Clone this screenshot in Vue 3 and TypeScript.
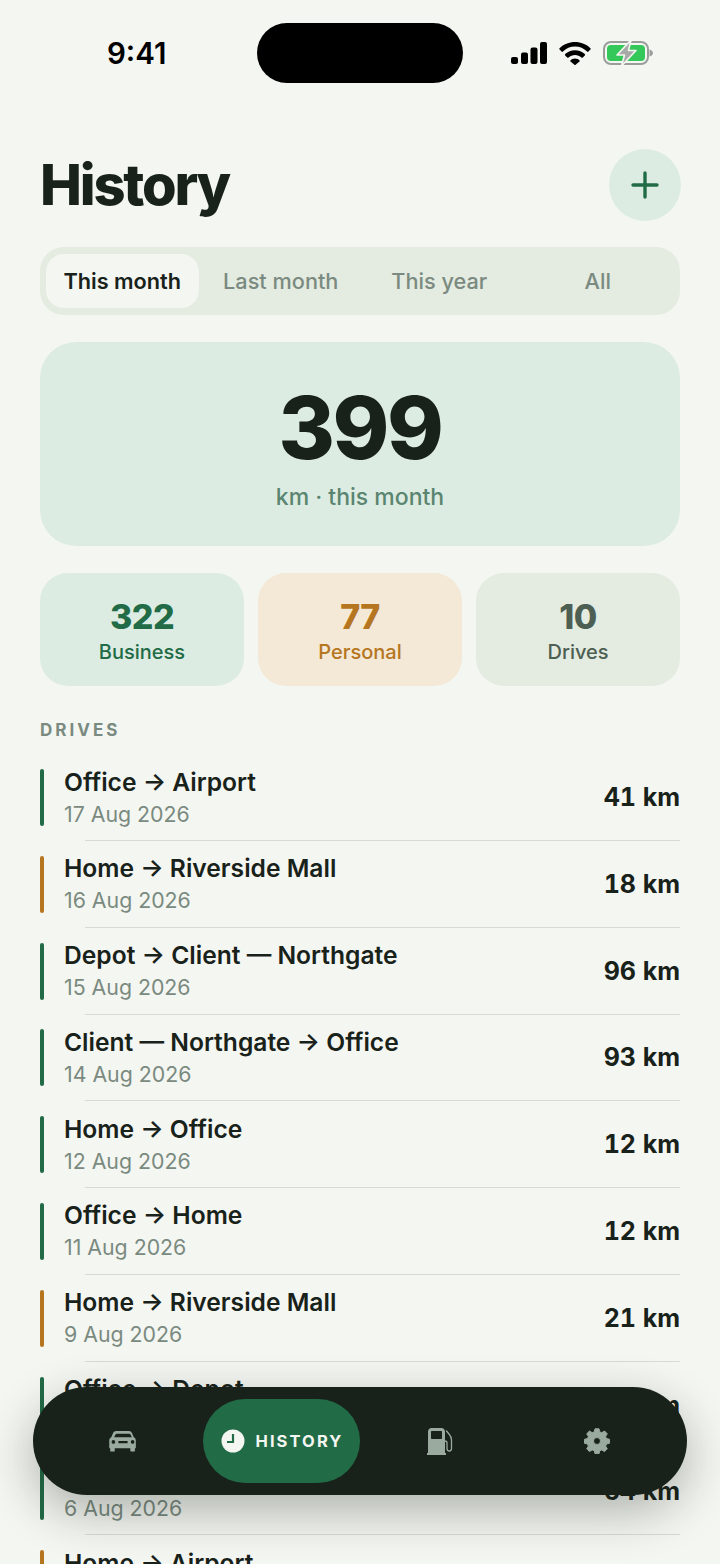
<template>
  <div class="screen">
    <header class="status-bar">
      <span class="time">9:41</span>
      <div class="island"></div>
      <div class="status-icons">
        <svg width="36" height="22" viewBox="0 0 36 22">
          <rect x="0" y="15" width="7" height="7" rx="2" />
          <rect x="10" y="10.5" width="7" height="11.5" rx="2" />
          <rect x="19.5" y="5.5" width="7" height="16.5" rx="2" />
          <rect x="29" y="0" width="7" height="22" rx="2" />
        </svg>
        <svg width="32" height="23" viewBox="0 0 32 23">
          <path d="M16 0C10 0 4.600 2.300.6 6.200a1 1 0 0 0 0 1.400l1.900 2a1 1 0 0 0 1.400 0C7 6.500 11.300 4.600 16 4.600s9 1.900 12.100 5a1 1 0 0 0 1.400 0l1.900-2a1 1 0 0 0 0-1.400C27.400 2.300 22 0 16 0Z" />
          <path d="M16 8.200c-3.800 0-7.200 1.500-9.800 3.900a1 1 0 0 0 0 1.400l2 2a1 1 0 0 0 1.400 0c1.700-1.500 3.900-2.500 6.400-2.500s4.700 1 6.400 2.500a1 1 0 0 0 1.400 0l2-2a1 1 0 0 0 0-1.400c-2.600-2.400-6-3.900-9.800-3.900Z" />
          <path d="M16 16.600c-1.800 0-3.400.7-4.500 1.800a.8.8 0 0 0 0 1.100l3.900 3.200a1 1 0 0 0 1.200 0l3.900-3.200a.8.8 0 0 0 0-1.100c-1.100-1.100-2.700-1.800-4.500-1.800Z" />
        </svg>
        <svg class="battery" width="51" height="26" viewBox="0 0 51 26">
          <rect x="1" y="2" width="44" height="22" rx="7" fill="none" stroke="#9a9d9a" stroke-width="2" />
          <rect x="4" y="5" width="38" height="16" rx="4" fill="#34c759" />
          <path d="M46.500 9.500c2 .5 3.500 2 3.500 3.500s-1.500 3-3.500 3.500Z" fill="#9a9d9a" />
          <path d="M28 0 14 15h7.500l-3 11L33 10.500h-7.500L28 0Z" fill="#a8aaa8" stroke="#f4f6f1" stroke-width="1.600" stroke-linejoin="round" />
        </svg>
      </div>
    </header>

    <main class="content">
      <div class="title-row">
        <h1>History</h1>
        <button class="add-btn" type="button">
          <svg width="30" height="30" viewBox="0 0 30 30" fill="none" stroke="#226b47" stroke-width="3.400" stroke-linecap="round">
            <path d="M15 3v24M3 15h24" />
          </svg>
        </button>
      </div>

      <div class="segments">
        <button
          v-for="(t, i) in tabs"
          :key="t"
          type="button"
          class="segment"
          :class="{ active: i === 0 }"
        >
          {{ t }}
        </button>
      </div>

      <section class="hero">
        <div class="hero-value">399</div>
        <div class="hero-label">km · this month</div>
      </section>

      <section class="stats">
        <div v-for="s in stats" :key="s.label" class="stat" :class="s.kind">
          <div class="stat-value">{{ s.value }}</div>
          <div class="stat-label">{{ s.label }}</div>
        </div>
      </section>

      <h2 class="section-label">DRIVES</h2>

      <ul class="drives">
        <li v-for="d in drives" :key="d.date" class="drive">
          <span class="bar" :class="d.personal ? 'personal' : 'business'"></span>
          <div class="drive-body">
            <div class="drive-text">
              <div class="drive-title">{{ d.route }}</div>
              <div class="drive-date">{{ d.date }}</div>
            </div>
            <div class="drive-km">{{ d.km }} km</div>
          </div>
        </li>
      </ul>
    </main>

    <nav class="tabbar">
      <div class="tab">
        <svg width="28" height="22" viewBox="0 0 30 24" fill="#9aaa9f">
          <path fill-rule="evenodd" d="M8.500 1h13c1.500 0 2.700.8 3.300 2.200l2 4.800c1.300.6 2.200 1.900 2.200 3.400V19a1 1 0 0 1-1 1v2.500a1 1 0 0 1-1 1h-3a1 1 0 0 1-1-1V20H6v2.500a1 1 0 0 1-1 1H2a1 1 0 0 1-1-1V20a1 1 0 0 1-1-1v-7.600c0-1.500.9-2.800 2.200-3.400l2-4.800C4.800 1.800 6 1 7.500 1Zm-.4 3c-.5 0-.9.200-1.100.7L5.300 8h19.400L23 4.700c-.2-.5-.6-.7-1.100-.7ZM4.500 11a2 2 0 1 0 0 4 2 2 0 0 0 0-4Zm21 0a2 2 0 1 0 0 4 2 2 0 0 0 0-4ZM10 12v2.500h10V12Z" />
        </svg>
      </div>
      <div class="tab active">
        <svg width="24" height="24" viewBox="0 0 24 24">
          <circle cx="12" cy="12" r="11.500" fill="#f4f6f1" />
          <path d="M12 5V13H6" fill="none" stroke="#226b47" stroke-width="2.200" />
        </svg>
        <span>HISTORY</span>
      </div>
      <div class="tab">
        <svg width="26" height="27" viewBox="0 0 26 27" fill="#9aaa9f">
          <path fill-rule="evenodd" d="M4.500 0h10C16.400 0 18 1.600 18 3.500V25h1v2H0v-2h1V3.500C1 1.600 2.600 0 4.500 0Zm.5 3c-.6 0-1 .4-1 1v6c0 .6.400 1 1 1h9c.6 0 1-.4 1-1V4c0-.6-.4-1-1-1Z" />
          <path d="M19.500 3 22 6c1.500 1.800 2.500 3.500 2.500 6v8.500c0 1.500-1 2.500-2.200 2.500s-2.300-1-2.300-2.500V15c0-1.200-.6-2-2-2" fill="none" stroke="#9aaa9f" stroke-width="1.300" stroke-linecap="round" />
        </svg>
      </div>
      <div class="tab">
        <svg width="26" height="26" viewBox="0 0 26 26" fill="#9aaa9f" stroke="#9aaa9f" stroke-width="1" stroke-linejoin="round">
          <path fill-rule="evenodd" d="M11 .8h4l.7 3 2.100.9 2.700-1.700 2.800 2.800-1.700 2.700.9 2.100 3 .7v4l-3 .7-.9 2.100 1.700 2.700-2.800 2.800-2.700-1.700-2.100.9-.7 3h-4l-.7-3-2.100-.9-2.700 1.700-2.800-2.800 1.700-2.700-.9-2.100-3-.7v-4l3-.7.9-2.100L2.700 5.800 5.500 3l2.700 1.700 2.100-.9ZM13 9.500a3.500 3.500 0 1 0 0 7 3.500 3.500 0 0 0 0-7Z" />
        </svg>
      </div>
    </nav>
  </div>
</template>

<script setup lang="ts">
interface Drive {
  route: string
  date: string
  km: number
  personal?: boolean
}

const tabs = ['This month', 'Last month', 'This year', 'All']

const stats = [
  { value: 322, label: 'Business', kind: 'business' },
  { value: 77, label: 'Personal', kind: 'personal' },
  { value: 10, label: 'Drives', kind: 'count' },
]

const drives: Drive[] = [
  { route: 'Office → Airport', date: '17 Aug 2026', km: 41 },
  { route: 'Home → Riverside Mall', date: '16 Aug 2026', km: 18, personal: true },
  { route: 'Depot → Client — Northgate', date: '15 Aug 2026', km: 96 },
  { route: 'Client — Northgate → Office', date: '14 Aug 2026', km: 93 },
  { route: 'Home → Office', date: '12 Aug 2026', km: 12 },
  { route: 'Office → Home', date: '11 Aug 2026', km: 12 },
  { route: 'Home → Riverside Mall', date: '9 Aug 2026', km: 21, personal: true },
  { route: 'Office → Depot', date: '8 Aug 2026', km: 4 },
  { route: 'Depot → Office', date: '6 Aug 2026', km: 64 },
  { route: 'Home → Airport', date: '3 Aug 2026', km: 38, personal: true },
]
</script>

<style>
html,
body {
  margin: 0;
  background: #f4f6f1;
}
</style>

<style scoped>
.screen {
  position: relative;
  width: 720px;
  height: 1564px;
  overflow: hidden;
  background: #f4f6f1;
  color: #18221a;
  font-family: Inter, "Liberation Sans", sans-serif;
}

.status-bar {
  position: relative;
  display: flex;
  align-items: center;
  justify-content: space-between;
  height: 60px;
  padding: 23px 66px 0 107px;
}

.time {
  font-size: 29.500px;
  font-weight: 600;
  color: #000;
}

.island {
  position: absolute;
  left: 257px;
  top: 23px;
  width: 206px;
  height: 60px;
  border-radius: 30px;
  background: #000;
}

.status-icons {
  display: flex;
  align-items: center;
  gap: 12px;
}

.content {
  padding: 66px 40px 0;
}

.title-row {
  display: flex;
  align-items: center;
  justify-content: space-between;
  height: 72px;
}

h1 {
  margin: 0;
  font-size: 56px;
  font-weight: 800;
  letter-spacing: -2.200px;
}

.add-btn {
  display: flex;
  align-items: center;
  justify-content: center;
  width: 72px;
  height: 72px;
  margin-right: -1px;
  padding: 0;
  border: none;
  border-radius: 50%;
  background: #ddece2;
}

.segments {
  display: flex;
  gap: 6px;
  height: 68px;
  margin-top: 26px;
  padding: 7px 6px;
  box-sizing: border-box;
  border-radius: 24px;
  background: #e4ebe0;
}

.segment {
  flex: 1;
  padding: 0;
  border: none;
  border-radius: 18px;
  background: transparent;
  font-family: inherit;
  font-size: 21.700px;
  font-weight: 500;
  color: #7a8a80;
}

.segment.active {
  background: #f4f6f1;
  font-weight: 600;
  color: #18221a;
}

.hero {
  display: flex;
  flex-direction: column;
  align-items: center;
  height: 204px;
  margin-top: 27px;
  border-radius: 36px;
  background: #ddece2;
}

.hero-value {
  margin-top: 36px;
  font-size: 86px;
  font-weight: 800;
  line-height: 100px;
  letter-spacing: -2.500px;
}

.hero-label {
  margin-top: 5px;
  font-size: 23px;
  font-weight: 500;
  color: #5a8570;
}

.stats {
  display: grid;
  grid-template-columns: repeat(3, 1fr);
  gap: 14px;
  margin-top: 27px;
}

.stat {
  height: 113px;
  border-radius: 28px;
  text-align: center;
}

.stat-value {
  margin-top: 23px;
  font-size: 34px;
  font-weight: 800;
  line-height: 42px;
  letter-spacing: -0.500px;
}

.stat-label {
  margin-top: 1px;
  font-size: 20px;
  font-weight: 500;
  line-height: 26px;
}

.stat.business {
  background: #ddece2;
  color: #226b47;
}

.stat.personal {
  background: #f4e8d6;
  color: #b5761f;
}

.stat.count {
  background: #e4ebe0;
  color: #4d5e53;
}

.section-label {
  margin: 34px 0 0;
  font-size: 17px;
  font-weight: 700;
  line-height: 20px;
  letter-spacing: 3px;
  color: #7a8a80;
}

.drives {
  margin: 28px 0 0;
  padding: 0;
  list-style: none;
}

.drive {
  position: relative;
  display: flex;
  height: 86.800px;
}

.bar {
  width: 4px;
  height: 57px;
  margin-top: 1px;
  border-radius: 2px;
}

.bar.business {
  background: #226b47;
}

.bar.personal {
  background: #b5761f;
}

.drive-body {
  display: flex;
  flex: 1;
  align-items: center;
  justify-content: space-between;
  height: 58px;
  margin-left: 20px;
}

.drive::after {
  content: "";
  position: absolute;
  left: 45px;
  right: 0;
  top: 72px;
  height: 1px;
  background: #d6dbd3;
}

.drive-title {
  font-size: 24.600px;
  font-weight: 600;
  line-height: 30px;
}

.drive-date {
  margin-top: 3px;
  font-size: 21.300px;
  line-height: 28px;
  color: #7a8a80;
}

.drive-km {
  font-size: 25px;
  font-weight: 700;
  font-variant-numeric: tabular-nums;
}

.tabbar {
  position: absolute;
  left: 33px;
  top: 1387px;
  display: grid;
  grid-template-columns: 160px 157px 160px 154px;
  align-items: center;
  width: 654px;
  height: 108px;
  box-sizing: border-box;
  padding: 0 13px 0 10px;
  border-radius: 54px;
  background: #18221a;
  box-shadow: 0 16px 48px rgba(24, 34, 26, 0.32);
}

.tab {
  display: flex;
  align-items: center;
  justify-content: center;
}

.tab.active {
  gap: 10px;
  height: 84px;
  padding-left: 2px;
  border-radius: 42px;
  background: #226b47;
  font-size: 16.500px;
  font-weight: 700;
  letter-spacing: 2.100px;
  color: #f4f6f1;
}
</style>
